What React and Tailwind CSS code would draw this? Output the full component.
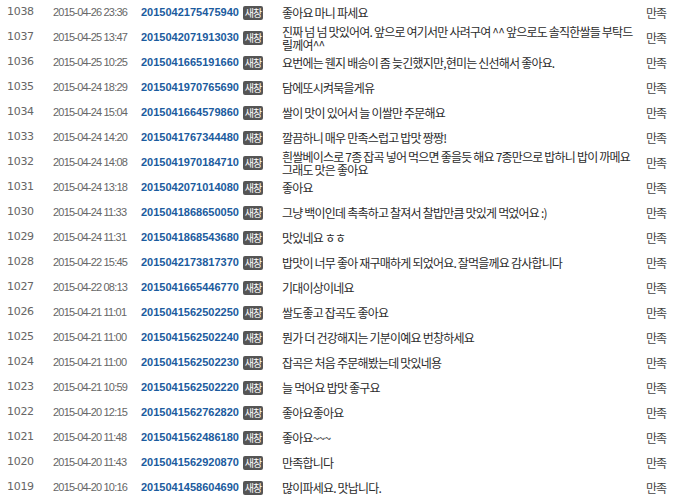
import React from 'react';

const rows = [
    [1038, '2015-04-26 23:36', '2015042175475940', ['좋아요 마니 파세요']],
    [1037, '2015-04-25 13:47', '2015042071913030', ['진짜 넘 넘 맛있어여. 앞으로 여기서만 사려구여 ^^ 앞으로도 솔직한쌀들 부탁드', '릴께여^^']],
    [1036, '2015-04-25 10:25', '2015041665191660', ['요번에는 웬지 배송이 좀 늦긴했지만,현미는 신선해서 좋아요.']],
    [1035, '2015-04-24 18:29', '2015041970765690', ['담에또시켜묵을게유']],
    [1034, '2015-04-24 15:04', '2015041664579860', ['쌀이 맛이 있어서 늘 이쌀만 주문해요']],
    [1033, '2015-04-24 14:20', '2015041767344480', ['깔끔하니 매우 만족스럽고 밥맛 짱짱!']],
    [1032, '2015-04-24 14:08', '2015041970184710', ['흰쌀베이스로 7종 잡곡 넣어 먹으면 좋을듯 해요 7종만으로 밥하니 밥이 까메요', '그래도 맛은 좋아요']],
    [1031, '2015-04-24 13:18', '2015042071014080', ['좋아요']],
    [1030, '2015-04-24 11:33', '2015041868650050', ['그냥 백이인데 촉촉하고 찰져서 찰밥만큼 맛있게 먹었어요 :)']],
    [1029, '2015-04-24 11:31', '2015041868543680', ['맛있네요 ㅎㅎ']],
    [1028, '2015-04-22 15:45', '2015042173817370', ['밥맛이 너무 좋아 재구매하게 되었어요. 잘먹을께요 감사합니다']],
    [1027, '2015-04-22 08:13', '2015041665446770', ['기대이상이네요']],
    [1026, '2015-04-21 11:01', '2015041562502250', ['쌀도좋고 잡곡도 좋아요']],
    [1025, '2015-04-21 11:00', '2015041562502240', ['뭔가 더 건강해지는 기분이예요 번창하세요']],
    [1024, '2015-04-21 11:00', '2015041562502230', ['잡곡은 처음 주문해봤는데 맛있네용']],
    [1023, '2015-04-21 10:59', '2015041562502220', ['늘 먹어요 밥맛 좋구요']],
    [1022, '2015-04-20 12:15', '2015041562762820', ['좋아요좋아요']],
    [1021, '2015-04-20 11:48', '2015041562486180', ['좋아요~~~']],
    [1020, '2015-04-20 11:43', '2015041562920870', ['만족합니다']],
    [1019, '2015-04-20 10:16', '2015041458604690', ['많이파세요. 맛납니다.']],
];

export default function App() {
    return (
        <div className="w-[677px] h-[504px] bg-white overflow-hidden flex flex-col">
            {rows.map(([no, date, order, lines]) => (
                <Row key={no} no={no} date={date} order={order} lines={lines} />
            ))}
        </div>
    );
}

function Row({ no, date, order, lines }) {
    return (
        <div className="h-[25px] flex items-center flex-shrink-0">
            <div className="w-[53px] pl-[7px] text-[11px] tracking-[-0.3px] text-[#666] font-['DejaVu_Sans',sans-serif]">
                {no}
            </div>
            <div className="w-[88px] text-[11px] tracking-[-0.8px] text-[#666] font-['Liberation_Sans',sans-serif] whitespace-nowrap">
                {date}
            </div>
            <div className="w-[141px] flex items-center gap-[4px]">
                <a className="text-[11px] font-bold text-[#1b5b9e] font-['Liberation_Sans',sans-serif] cursor-pointer">
                    {order}
                </a>
                <span className="w-[20px] h-[14px] rounded-[2px] bg-[#555] text-white text-[10px] leading-[14px] tracking-[-1px] text-center font-['Noto_Sans_CJK_KR',sans-serif]">
                    새창
                </span>
            </div>
            <div className="w-[364px] text-[12px] leading-[13px] tracking-[-0.8px] text-[#2b2b2b] font-['Noto_Sans_CJK_KR',sans-serif] whitespace-nowrap">
                {lines.map((l, i) => (
                    <div key={i}>{l}</div>
                ))}
            </div>
            <div className="flex-1 text-[12px] tracking-[-1px] text-[#444] font-['Noto_Sans_CJK_KR',sans-serif]">
                만족
            </div>
        </div>
    );
}
